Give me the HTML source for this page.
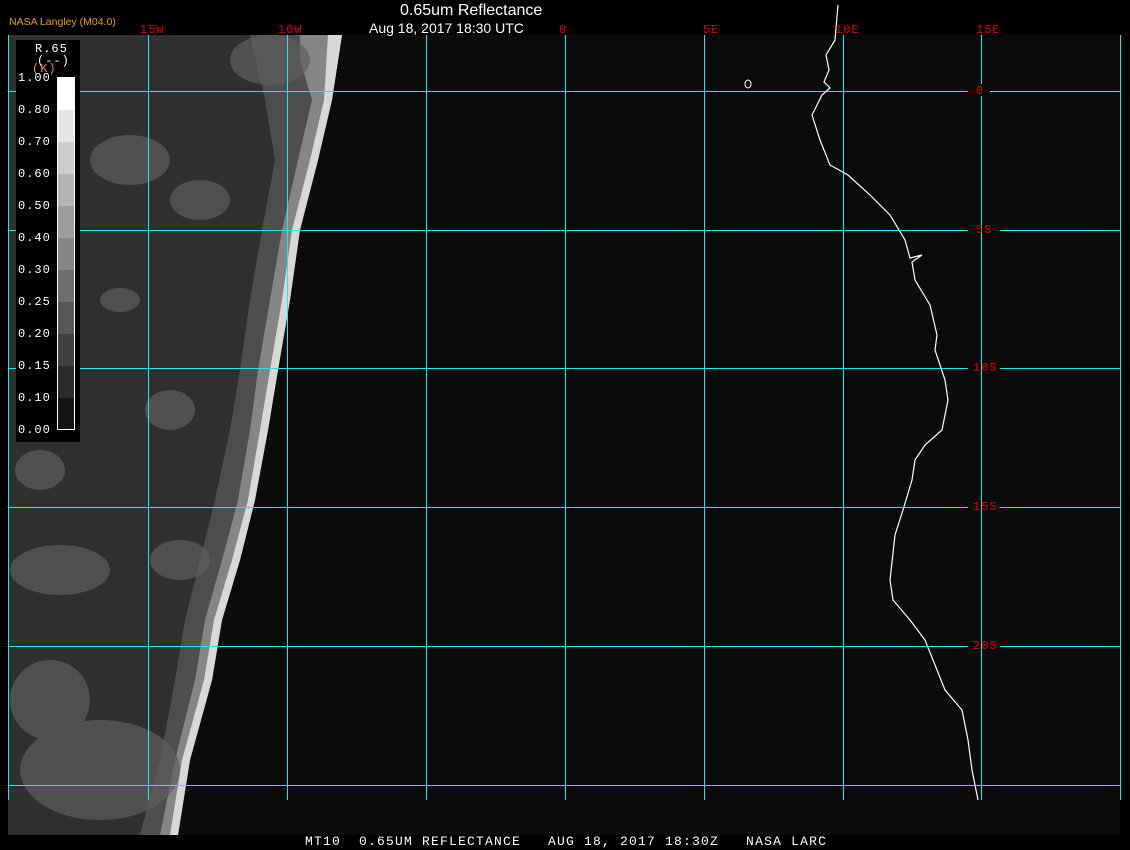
<!DOCTYPE html>
<html><head><meta charset="utf-8"><style>
html,body{margin:0;padding:0;background:#000;width:1130px;height:850px;overflow:hidden}
.t{position:absolute;font-family:"Liberation Mono","DejaVu Sans Mono",monospace;font-size:12px;line-height:12px;white-space:pre;letter-spacing:1px}
.r{color:#e00000}
.w{color:#fff}
</style></head><body>
<svg width="1130" height="850" style="position:absolute;left:0;top:0">
<rect x="8" y="35" width="1112" height="800" fill="#0b0b0b"/>
<polygon points="8,35 342,35 332,100 318,160 300,230 290,300 278,370 268,430 255,500 240,560 222,620 212,680 190,760 178,835 8,835" fill="#303030"/>
<polygon points="250,35 342,35 332,100 318,160 300,230 290,300 278,370 268,430 255,500 240,560 222,620 212,680 190,760 178,835 140,835 160,760 175,680 185,620 200,560 215,500 230,430 240,370 250,300 262,230 275,160 265,100" fill="#4e4e4e"/>
<polygon points="300,35 342,35 332,100 318,160 300,230 290,300 278,370 268,430 255,500 240,560 222,620 212,680 190,760 178,835 160,835 175,760 195,680 205,620 222,560 238,500 250,430 258,370 270,300 282,230 298,160 312,100 300,60" fill="#858585"/>
<polygon points="328,35 342,35 332,100 318,160 300,230 290,300 278,370 268,430 255,500 240,560 222,620 212,680 190,760 178,835 170,835 182,760 204,680 214,620 232,560 248,500 260,430 270,370 282,300 292,230 310,160 324,100" fill="#d8d8d8"/>
<g fill="#5e5e5e" opacity="0.7">
<ellipse cx="130" cy="160" rx="40" ry="25"/><ellipse cx="200" cy="200" rx="30" ry="20"/><ellipse cx="120" cy="300" rx="20" ry="12"/>
<ellipse cx="170" cy="410" rx="25" ry="20"/><ellipse cx="60" cy="570" rx="50" ry="25"/><ellipse cx="180" cy="560" rx="30" ry="20"/>
<ellipse cx="50" cy="700" rx="40" ry="40"/><ellipse cx="100" cy="770" rx="80" ry="50"/><ellipse cx="40" cy="470" rx="25" ry="20"/>
<ellipse cx="270" cy="60" rx="40" ry="25"/>
</g>
<g stroke-width="1" shape-rendering="crispEdges" stroke="#10f0f0">
<line x1="8.5" y1="35" x2="8.5" y2="800"/><line x1="148.5" y1="35" x2="148.5" y2="800"/><line x1="287.5" y1="35" x2="287.5" y2="800"/><line x1="426.5" y1="35" x2="426.5" y2="800"/><line x1="565.5" y1="35" x2="565.5" y2="800"/><line x1="704.5" y1="35" x2="704.5" y2="800"/><line x1="843.5" y1="35" x2="843.5" y2="800"/><line x1="981.5" y1="35" x2="981.5" y2="84"/><line x1="981.5" y1="96" x2="981.5" y2="800"/><line x1="1120.5" y1="35" x2="1120.5" y2="800"/>
<line x1="8" y1="91.5" x2="968" y2="91.5"/><line x1="990" y1="91.5" x2="1120" y2="91.5"/>
<line x1="8" y1="230.5" x2="968" y2="230.5"/><line x1="1000" y1="230.5" x2="1120" y2="230.5"/>
<line x1="8" y1="368.5" x2="968" y2="368.5"/><line x1="1000" y1="368.5" x2="1120" y2="368.5"/>
<line x1="8" y1="507.5" x2="968" y2="507.5"/><line x1="1000" y1="507.5" x2="1120" y2="507.5"/>
<line x1="8" y1="646.5" x2="968" y2="646.5"/><line x1="1000" y1="646.5" x2="1120" y2="646.5"/>
<line x1="8" y1="785.5" x2="1120" y2="785.5"/>
</g>
<polyline fill="none" stroke="#fff" stroke-width="1.2" points="838,5 835,40 826,55 829,70 824,82 830,88 822,95 812,115 820,140 830,165 848,175 870,195 890,215 905,240 910,258 922,255 912,262 915,280 930,305 937,335 935,350 945,380 948,400 942,430 925,445 915,460 912,480 903,510 895,535 890,580 893,600 910,620 925,640 935,665 945,690 962,710 968,740 972,770 978,800"/>
<ellipse cx="748" cy="84" rx="3" ry="4" fill="none" stroke="#fff"/>
<rect x="16" y="40" width="64" height="402" fill="#000"/>
<g shape-rendering="crispEdges">
<rect x="57" y="77" width="18" height="33" fill="#fff"/>
<rect x="57" y="110" width="18" height="32" fill="#e6e6e6"/>
<rect x="57" y="142" width="18" height="32" fill="#cdcdcd"/>
<rect x="57" y="174" width="18" height="32" fill="#b4b4b4"/>
<rect x="57" y="206" width="18" height="32" fill="#9c9c9c"/>
<rect x="57" y="238" width="18" height="32" fill="#858585"/>
<rect x="57" y="270" width="18" height="32" fill="#6e6e6e"/>
<rect x="57" y="302" width="18" height="32" fill="#575757"/>
<rect x="57" y="334" width="18" height="32" fill="#414141"/>
<rect x="57" y="366" width="18" height="32" fill="#2b2b2b"/>
<rect x="57" y="398" width="18" height="32" fill="#151515"/>
<rect x="57.5" y="77.5" width="17" height="352" fill="none" stroke="#fff"/>
</g>
</svg>
<div class="t" style="left:9px;top:16px;color:#f0a000;font-family:'Liberation Sans',sans-serif;font-size:10.5px;letter-spacing:0">NASA Langley (M04.0)</div>
<div class="t w" style="left:400px;top:2px;font-family:'Liberation Sans',sans-serif;font-size:16px;line-height:17px;letter-spacing:0">0.65um Reflectance</div>
<div class="t w" style="left:369px;top:20px;font-family:'Liberation Sans',sans-serif;font-size:14px;line-height:16px;letter-spacing:0">Aug 18, 2017 18:30 UTC</div>
<div class="t r" style="left:140px;top:24px">15W</div>
<div class="t r" style="left:278px;top:24px">10W</div>
<div class="t r" style="left:559px;top:24px">0</div>
<div class="t r" style="left:703px;top:24px">5E</div>
<div class="t r" style="left:835px;top:24px">10E</div>
<div class="t r" style="left:976px;top:24px">15E</div>
<div class="t r" style="left:976px;top:85px">0</div>
<div class="t r" style="left:976px;top:224px">5S</div>
<div class="t r" style="left:973px;top:362px">10S</div>
<div class="t r" style="left:973px;top:501px">15S</div>
<div class="t r" style="left:973px;top:640px">20S</div>
<div class="t w" style="left:35px;top:43px">R.65</div>
<div class="t w" style="left:37px;top:55px">(--)</div>
<div class="t" style="left:32px;top:63px;color:#f08060">(K)</div>
<div class="t w" style="left:18px;top:62px;line-height:32px">1.00
0.80
0.70
0.60
0.50
0.40
0.30
0.25
0.20
0.15
0.10
0.00</div>
<div class="t w" style="left:305px;top:836px;font-size:13px;letter-spacing:1.2px">MT10  0.65UM REFLECTANCE   AUG 18, 2017 18:30Z   NASA LARC</div>
</body></html>
